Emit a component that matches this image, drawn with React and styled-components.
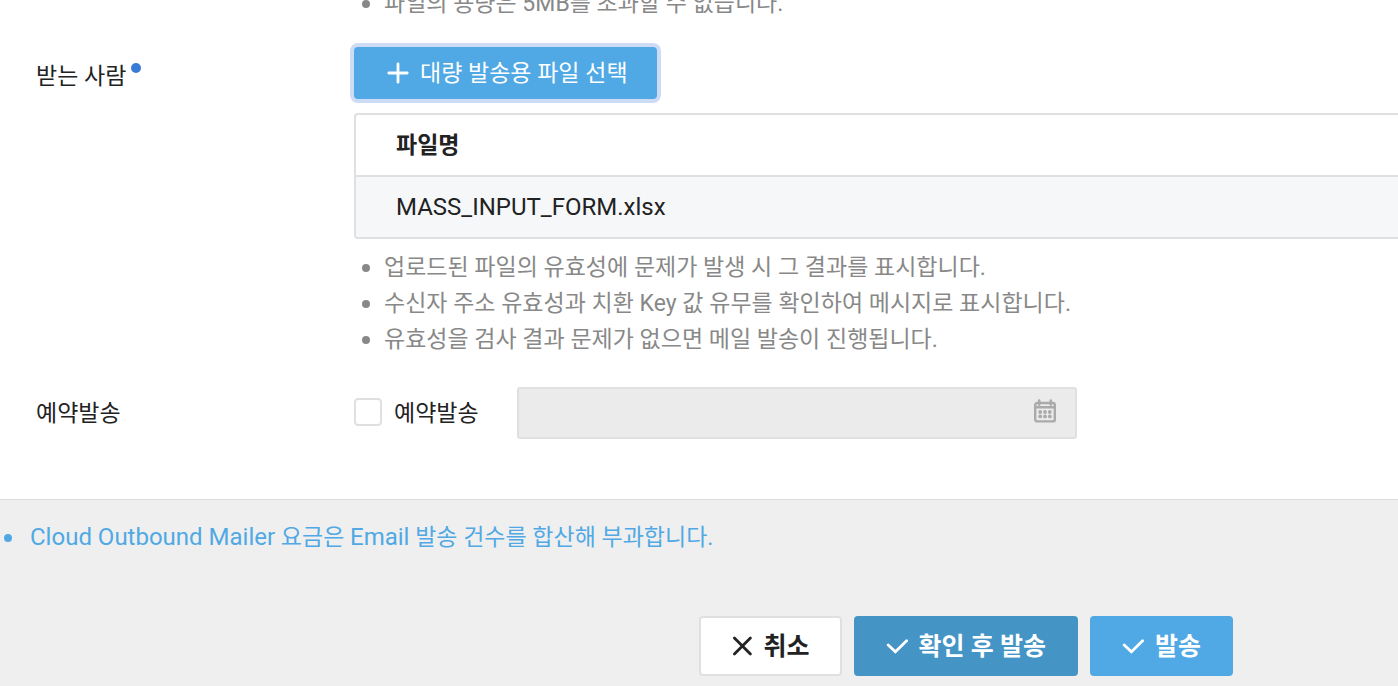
import React from 'react';
import styled, { createGlobalStyle } from 'styled-components';

const GlobalStyle = createGlobalStyle`
  *, *::before, *::after { box-sizing: border-box; }
  body {
    margin: 0;
    background: #efefef;
    color: #222;
    font-family: Roboto, "Noto Sans CJK KR", sans-serif;
    font-size: 23px;
    line-height: 36px;
    overflow: hidden;
  }
  button, input { font: inherit; }
`;

const Form = styled.form`
  margin: 0;
`;

const Fields = styled.div`
  background: #fff;
  padding-bottom: 60px;
  border-bottom: 1px solid #dcdcdc;
`;

const Row = styled.div`
  display: grid;
  grid-template-columns: 318px minmax(0, 1fr);
  padding-left: 36px;
  margin-top: ${(p) => p.$top}px;
`;

const RowTitle = styled.div`
  display: flex;
  align-items: flex-start;
  gap: 5px;
  padding-top: ${(p) => p.$inset}px;
`;

const RequiredDot = styled.span`
  width: 10px;
  height: 10px;
  margin-top: 4px;
  border-radius: 50%;
  background: #3a7bd5;
`;

const Notes = styled.ul`
  list-style: none;
  margin: ${(p) => p.$top || 0}px 0 0;
  padding: 0 0 0 8px;
  color: ${(p) => p.$color || '#888'};
`;

const Note = styled.li`
  display: flex;
  align-items: center;
  gap: ${(p) => p.$gap || 14}px;
  white-space: nowrap;

  &::before {
    content: '';
    flex: none;
    width: 8px;
    height: 8px;
    border-radius: 50%;
    background: currentColor;
  }
`;

const Latin = styled.span`
  font-size: 24px;
`;

const Button = styled.button`
  display: inline-flex;
  align-items: center;
  gap: 11px;
  border: 0;
  border-radius: 4px;
  background: #50a9e4;
  color: #fff;
  white-space: nowrap;
  cursor: pointer;
`;

const FileButton = styled(Button)`
  height: 52px;
  padding: 2px 29px 0 33px;
  box-shadow: 0 0 0 4px #cddcf4;
`;

const tones = {
  plain: { background: '#fff', color: '#222', border: '#e0e0e0' },
  dark: { background: '#4494c6', color: '#fff', border: '#4494c6' },
  light: { background: '#50a9e4', color: '#fff', border: '#50a9e4' },
};

const ActionButton = styled(Button)`
  height: 60px;
  padding: 2px 30px 0;
  border: 2px solid ${(p) => tones[p.$tone].border};
  background: ${(p) => tones[p.$tone].background};
  color: ${(p) => tones[p.$tone].color};
  font-size: 25px;
  font-weight: 700;
`;

const Glyph = styled.svg`
  flex: none;
  width: 22px;
  height: 22px;
  margin-bottom: 2px;
  fill: none;
  stroke: currentColor;
  stroke-width: 2.8;
  stroke-linecap: round;
`;

const TableFrame = styled.div`
  margin-top: 14px;
  border: 2px solid #e0e0e0;
  border-right: 0;
  border-radius: 4px 0 0 4px;
  overflow: hidden;
`;

const Table = styled.table`
  width: 100%;
  border-collapse: separate;
  border-spacing: 0;
  text-align: left;
`;

const HeadCell = styled.th`
  height: 62px;
  padding: 2px 40px 0;
  border-bottom: 2px solid #e0e0e0;
  font-weight: 700;
`;

const Cell = styled.td`
  height: 60px;
  padding: 0 40px;
  background: #f6f7f9;
  font-size: 24px;
`;

const Schedule = styled.div`
  display: flex;
  align-items: center;
  gap: 38px;
`;

const CheckLabel = styled.label`
  display: flex;
  align-items: center;
  gap: 12px;
  padding-top: 2px;
  white-space: nowrap;
`;

const Checkbox = styled.input`
  appearance: none;
  width: 28px;
  height: 28px;
  margin: 0 0 4px;
  border: 2px solid #e0e0e0;
  border-radius: 4px;
  background: #fff;
`;

const DateField = styled.div`
  display: flex;
  align-items: center;
  flex: 0 1 560px;
  height: 52px;
  padding-right: 18px;
  border: 2px solid #e0e0e0;
  border-radius: 3px;
  background: #ebebeb;
`;

const DateInput = styled.input`
  flex: 1;
  min-width: 0;
  padding: 0 16px;
  border: 0;
  background: transparent;
`;

const Calendar = styled.svg`
  flex: none;
  width: 24px;
  height: 26px;
  margin-bottom: 4px;
`;

const Footer = styled.footer`
  padding: 19px 165px 10px 0;
`;

const FeeNotes = styled(Notes)`
  padding-left: 4px;
`;

const Actions = styled.div`
  display: flex;
  justify-content: flex-end;
  gap: 12px;
  margin-top: 60px;
`;

const PlusIcon = () => (
  <Glyph viewBox="0 0 22 22" aria-hidden="true">
    <path d="M11 1.8v18.4M1.8 11h18.4" />
  </Glyph>
);

const CloseIcon = () => (
  <Glyph viewBox="0 0 22 22" aria-hidden="true">
    <path d="M3.4 3l16 16M19.4 3L3.4 19" />
  </Glyph>
);

const CheckIcon = () => (
  <Glyph viewBox="0 0 22 22" aria-hidden="true">
    <path d="M2.2 10l7.2 6.8L20.6 5.8" />
  </Glyph>
);

const CalendarIcon = () => (
  <Calendar viewBox="0 0 24 26" aria-hidden="true">
    <rect x="2.2" y="5" width="19.6" height="18.4" rx="2" fill="none" stroke="#aaa" strokeWidth="2.4" />
    <path d="M2.2 9.2h19.6M6.2 2.6v4M17.8 2.6v4" fill="none" stroke="#aaa" strokeWidth="2.6" strokeLinecap="round" />
    <g fill="#aaa">
      {[14, 18.4].map((y) =>
        [7.2, 12, 16.8].map((x) => <circle key={`${x}-${y}`} cx={x} cy={y} r="1.9" />)
      )}
    </g>
  </Calendar>
);

export default function App() {
  return (
    <>
      <GlobalStyle />
      <Form onSubmit={(e) => e.preventDefault()}>
        <Fields>
          <Row $top={-14}>
            <span />
            <Notes>
              <Note>파일의 용량은 5MB를 초과할 수 없습니다.</Note>
            </Notes>
          </Row>

          <Row $top={25}>
            <RowTitle $inset={12}>
              받는 사람
              <RequiredDot />
            </RowTitle>
            <div>
              <FileButton type="button">
                <PlusIcon />
                대량 발송용 파일 선택
              </FileButton>
              <TableFrame>
                <Table>
                  <thead>
                    <tr>
                      <HeadCell scope="col">파일명</HeadCell>
                    </tr>
                  </thead>
                  <tbody>
                    <tr>
                      <Cell>MASS_INPUT_FORM.xlsx</Cell>
                    </tr>
                  </tbody>
                </Table>
              </TableFrame>
              <Notes $top={11}>
                <Note>업로드된 파일의 유효성에 문제가 발생 시 그 결과를 표시합니다.</Note>
                <Note>수신자 주소 유효성과 치환 Key 값 유무를 확인하여 메시지로 표시합니다.</Note>
                <Note>유효성을 검사 결과 문제가 없으면 메일 발송이 진행됩니다.</Note>
              </Notes>
            </div>
          </Row>

          <Row $top={29}>
            <RowTitle $inset={9}>예약발송</RowTitle>
            <Schedule>
              <CheckLabel>
                <Checkbox type="checkbox" />
                예약발송
              </CheckLabel>
              <DateField>
                <DateInput type="text" disabled aria-label="예약발송 일시" />
                <CalendarIcon />
              </DateField>
            </Schedule>
          </Row>
        </Fields>

        <Footer>
          <FeeNotes $color="#50a9e4">
            <Note $gap={18}>
              <span>
                <Latin>Cloud Outbound Mailer</Latin> 요금은 <Latin>Email</Latin> 발송 건수를 합산해 부과합니다.
              </span>
            </Note>
          </FeeNotes>
          <Actions>
            <ActionButton type="button" $tone="plain">
              <CloseIcon />
              취소
            </ActionButton>
            <ActionButton type="button" $tone="dark">
              <CheckIcon />
              확인 후 발송
            </ActionButton>
            <ActionButton type="submit" $tone="light">
              <CheckIcon />
              발송
            </ActionButton>
          </Actions>
        </Footer>
      </Form>
    </>
  );
}
